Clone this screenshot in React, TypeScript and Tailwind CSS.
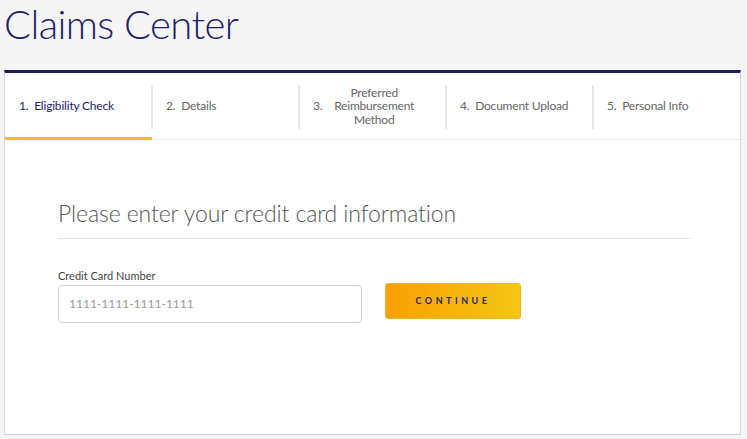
import React from "react";

const tabs = [
  { n: "1.", label: "Eligibility Check", active: true },
  { n: "2.", label: "Details" },
  { n: "3.", label: "Preferred Reimbursement Method", multi: true },
  { n: "4.", label: "Document Upload" },
  { n: "5.", label: "Personal Info" },
];

export default function App() {
  return (
    <div
      className="w-[747px] h-[439px] bg-[#f5f5f5] overflow-hidden"
      style={{ fontFamily: "Lato, 'Open Sans', sans-serif" }}
    >
      <div className="h-[70px] pl-[4px] flex items-start">
        <h1 className="text-[40px] leading-[48px] font-light text-[#1d1d6b] tracking-[-0.6px]">
          Claims Center
        </h1>
      </div>
      <div className="mx-[4px] w-[737px] h-[365px] bg-white border-t-[3px] border-t-[#1b1b66] border-x border-b border-x-[#d4d4ee] border-b-[#c9c9ea]">
        <div className="flex h-[67px] border-b border-[#ececec]">
          {tabs.map((t, i) => (
            <div key={i} className="relative flex-1 flex items-center">
              {i > 0 && (
                <div className="absolute left-[-1px] top-[12px] bottom-[10px] w-[2px] bg-[#e6e6e6]" />
              )}
              {t.multi ? (
                <div className="flex items-center w-full pl-[14px] pr-[20px] text-[12px] text-[#666] tracking-[-0.2px]">
                  <span>{t.n}</span>
                  <span className="flex-1 text-center leading-[13.5px]">
                    Preferred
                    <br />
                    Reimbursement
                    <br />
                    Method
                  </span>
                </div>
              ) : (
                <div
                  className={`pl-[14px] text-[12px] tracking-[-0.2px] ${
                    t.active ? "text-[#1d1d6b]" : "text-[#666]"
                  }`}
                >
                  {t.n}&nbsp;&nbsp;{t.label}
                </div>
              )}
              {t.active && (
                <div className="absolute left-0 right-0 bottom-[-1px] h-[3px] bg-[#f5b642]" />
              )}
            </div>
          ))}
        </div>
        <div className="pl-[53px] pr-[49px] pt-[58px]">
          <h2 className="text-[23px] leading-[30px] font-light text-[#555] tracking-[-0.1px]">
            Please enter your credit card information
          </h2>
          <div className="mt-[10px] h-px bg-[#e5e5e5]" />
          <div className="mt-[30px] flex items-end gap-[23px]">
            <div>
              <div className="text-[11px] leading-[14px] text-[#444] mb-[2px]">
                Credit Card Number
              </div>
              <div className="w-[304px] h-[38px] rounded-[4px] border border-[#cfcfcf] flex items-center pl-[10px] text-[12px] text-[#9a9a9a]">
                1111-1111-1111-1111
              </div>
            </div>
            <button className="mb-[4px] w-[136px] h-[36px] rounded-[3px] bg-gradient-to-r from-[#f9a003] to-[#f4c514] text-[#25256e] text-[9px] font-bold tracking-[3.5px] border border-[#f1b233]">
              CONTINUE
            </button>
          </div>
        </div>
      </div>
    </div>
  );
}
